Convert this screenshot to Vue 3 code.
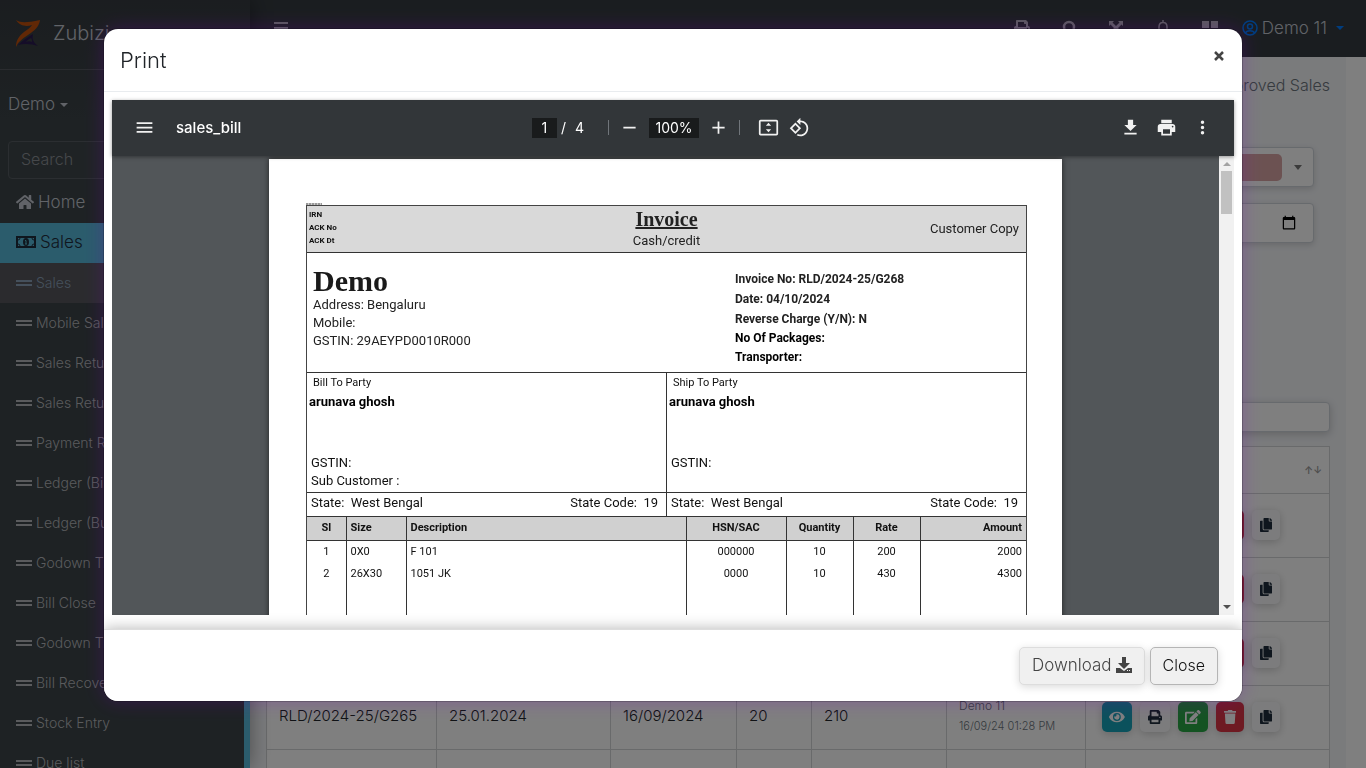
<script setup>
import { ref } from 'vue'

const search = ref('')
const tableSearch = ref('')
const saleDate = ref('')
const pageNo = ref('1')
const zoom = ref('100%')

const menu = [
  'Sales', 'Mobile Sales', 'Sales Return', 'Sales Return List', 'Payment Receive', 'Ledger (Bill)',
  'Ledger (Buyer)', 'Godown Transfer', 'Bill Close', 'Godown Transfer List', 'Bill Recovery',
  'Stock Entry', 'Due list',
]
const rows = [
  { cells: ['', '', '', '', ''], editable: true },
  { cells: ['', '', '', '', ''], editable: true },
  { cells: ['', '', '', '', ''], editable: true },
  { cells: ['RLD/2024-25/G265', '25.01.2024', '16/09/2024', '20', '210'], who: 'Demo 11', at: '16/09/24 01:28 PM', editable: true },
  { cells: ['', '', '', '', ''], editable: false },
]
const fa = {
  eye: ['0 0 576 512', 'M572.52 241.4C518.29 135.59 410.93 64 288 64S57.68 135.64 3.48 241.41a32.35 32.35 0 0 0 0 29.19C57.71 376.41 165.07 448 288 448s230.32-71.64 284.52-177.41a32.35 32.35 0 0 0 0-29.19zM288 400a144 144 0 1 1 144-144 143.93 143.93 0 0 1-144 144zm0-240a95.31 95.31 0 0 0-25.31 3.79 47.85 47.85 0 0 1-66.9 66.9A95.78 95.78 0 1 0 288 160z'],
  print: ['0 0 512 512', 'M448 192V77.25c0-8.49-3.37-16.62-9.37-22.63L393.37 9.37c-6-6-14.14-9.37-22.63-9.37H96C78.33 0 64 14.33 64 32v160c-35.35 0-64 28.65-64 64v112c0 8.84 7.16 16 16 16h48v96c0 17.67 14.33 32 32 32h320c17.67 0 32-14.33 32-32v-96h48c8.84 0 16-7.16 16-16V256c0-35.35-28.65-64-64-64zm-64 256H128v-96h256v96zm0-224H128V64h192v48c0 8.84 7.16 16 16 16h48v96zm48 72c-13.25 0-24-10.75-24-24 0-13.26 10.75-24 24-24s24 10.74 24 24c0 13.25-10.75 24-24 24z'],
  edit: ['0 0 576 512', 'M402.6 83.2l90.2 90.2c3.8 3.8 3.8 10 0 13.8L274.4 405.6l-92.8 10.3c-12.4 1.4-22.9-9.1-21.5-21.5l10.3-92.8L388.8 83.2c3.8-3.8 10-3.8 13.8 0zm162-22.9l-48.8-48.8c-15.2-15.2-39.9-15.2-55.2 0l-35.4 35.4c-3.8 3.8-3.8 10 0 13.8l90.2 90.2c3.8 3.8 10 3.8 13.8 0l35.4-35.4c15.2-15.3 15.2-40 0-55.2zM384 346.2V448H64V128h229.8c3.2 0 6.2-1.3 8.5-3.5l40-40c7.6-7.6 2.2-20.5-8.5-20.5H48C21.5 64 0 85.5 0 112v352c0 26.5 21.5 48 48 48h352c26.5 0 48-21.5 48-48V306.2c0-10.7-12.9-16-20.5-8.5l-40 40c-2.2 2.3-3.5 5.3-3.5 8.5z'],
  trash: ['0 0 448 512', 'M432 32H312l-9.4-18.7A24 24 0 0 0 281.1 0H166.8a23.72 23.72 0 0 0-21.4 13.3L136 32H16A16 16 0 0 0 0 48v32a16 16 0 0 0 16 16h416a16 16 0 0 0 16-16V48a16 16 0 0 0-16-16zM53.2 467a48 48 0 0 0 47.9 45h245.8a48 48 0 0 0 47.9-45L416 128H32z'],
  copy: ['0 0 448 512', 'M320 448v40c0 13.255-10.745 24-24 24H24c-13.255 0-24-10.745-24-24V120c0-13.255 10.745-24 24-24h72v296c0 30.879 25.121 56 56 56h168zm0-344V0H152c-13.255 0-24 10.745-24 24v368c0 13.255 10.745 24 24 24h272c13.255 0 24-10.745 24-24V128H344c-13.2 0-24-10.8-24-24zm120.971-31.029L375.029 7.029A24 24 0 0 0 358.059 0H352v96h96v-6.059a24 24 0 0 0-7.029-16.97z'],
}
const actions = [
  { icon: 'eye', label: 'View', tone: 'info' },
  { icon: 'print', label: 'Print', tone: 'plain' },
  { icon: 'edit', label: 'Edit', tone: 'success' },
  { icon: 'trash', label: 'Delete', tone: 'danger' },
  { icon: 'copy', label: 'Copy', tone: 'plain narrow' },
]
const items = [
  ['1', '0X0', 'F 101', '000000', '10', '200', '2000'],
  ['2', '26X30', '1051 JK', '0000', '10', '430', '4300'],
]
const parties = [
  { title: 'Bill To Party', sub: 'Sub Customer :' },
  { title: 'Ship To Party', sub: '' },
]
</script>

<template>
  <div class="app">
    <aside class="sidebar">
      <a class="brand" href="#">
        <svg class="logo" viewBox="0 0 24 27" aria-hidden="true">
          <path d="M0 0c5 3 10 3 24 0-1 7-5 10-12 15C6 19 2 22 0 27c0-7 3-11 8-15 4-3 7-5 8-7C10 7 4 6 0 0z" fill="#c2500c" />
          <path d="M2 25c5-5 10-8 15-11-1 5 0 8 5 12-6-2-13-3-20-1zm8-3c2-1 4-1 6 0 0-2 0-3-1-4-2 1-4 2-5 4z" fill="#2b1a50" fill-rule="evenodd" />
        </svg>
        <span>Zubizi</span>
      </a>
      <button class="user">Demo <i class="caret"></i></button>
      <div class="side-search"><input v-model="search" type="text" placeholder="Search" aria-label="Search menu" /></div>
      <nav>
        <a class="top-link" href="#">
          <svg viewBox="0 0 576 512" width="18" height="16"><path fill="currentColor" d="M280.37 148.26L96 300.11V464a16 16 0 0 0 16 16l112.06-.29a16 16 0 0 0 15.92-16V368a16 16 0 0 1 16-16h64a16 16 0 0 1 16 16v95.64a16 16 0 0 0 16 16.05L464 480a16 16 0 0 0 16-16V300L295.67 148.26a12.19 12.19 0 0 0-15.3 0zM571.6 251.47L488 182.56V44.05a12 12 0 0 0-12-12h-56a12 12 0 0 0-12 12v72.61L318.47 43a48 48 0 0 0-61 0L4.34 251.47a12 12 0 0 0-1.6 16.9l25.5 31A12 12 0 0 0 45.15 301l235.22-193.74a12.19 12.19 0 0 1 15.3 0L530.9 301a12 12 0 0 0 16.9-1.6l25.5-31a12 12 0 0 0-1.7-16.93z" /></svg>
          Home
        </a>
        <a class="top-link active" href="#">
          <svg viewBox="0 0 20 12" width="20" height="12">
            <rect x="1" y="1" width="18" height="10" fill="none" stroke="currentColor" stroke-width="2" />
            <path d="M2 4a2 2 0 0 0 2-2M18 4a2 2 0 0 1-2-2M2 8a2 2 0 0 1 2 2M18 8a2 2 0 0 0-2 2" fill="none" stroke="currentColor" />
            <ellipse cx="10" cy="6" rx="3" ry="4" fill="currentColor" />
            <path d="M9 4.500h1v3.500M9 8h2" fill="none" stroke="#5bc" stroke-width="1" />
          </svg>
          Sales
        </a>
        <a v-for="(m, i) in menu" :key="m" class="sub-link" :class="{ current: i === 0 }" href="#"><i class="bars"></i>{{ m }}</a>
      </nav>
    </aside>

    <div class="main">
      <header class="navbar">
        <button class="nav-btn" aria-label="Toggle menu"><svg viewBox="0 0 14 14" width="14" height="14"><path fill="currentColor" d="M0 1h14v2H0zM0 6h14v2H0zM0 11h14v2H0z" /></svg></button>
        <div class="nav-icons">
          <button class="nav-btn" aria-label="Print"><svg :viewBox="fa.print[0]" width="16" height="16"><path fill="currentColor" :d="fa.print[1]" /></svg></button>
          <button class="nav-btn" aria-label="Find"><svg viewBox="0 0 16 16" width="16" height="16" fill="none" stroke="currentColor" stroke-width="2.500"><circle cx="8" cy="7" r="5" /><path d="M11 11l4 5" /></svg></button>
          <button class="nav-btn" aria-label="Full screen"><svg viewBox="0 0 16 16" width="16" height="16"><path fill="currentColor" d="M1 1h5L4.500 2.500 8 6l3.500-3.500L10 1h5v5l-1.500-1.500L10 8l3.500 3.500L15 10v5h-5l1.500-1.500L8 10l-3.500 3.500L6 15H1v-5l1.500 1.500L6 8 2.500 4.500 1 6z" /></svg></button>
          <button class="nav-btn" aria-label="Notifications"><svg viewBox="0 0 16 16" width="16" height="16" fill="none" stroke="currentColor" stroke-width="1.500"><path d="M8 0v2M4 12V7c0-6 8-6 8 0v5l2 1H2zM7 15h2" /></svg></button>
          <button class="nav-btn" aria-label="Apps"><svg viewBox="0 0 16 16" width="16" height="16"><path fill="currentColor" d="M0 1h7v7H0zM9 1h7v7H9zM0 10h7v6H0zM9 10h7v6H9z" /></svg></button>
        </div>
        <button class="account">
          <svg viewBox="0 0 16 16" width="16" height="16" fill="none" stroke="currentColor" stroke-width="1.500"><circle cx="8" cy="8" r="7" /><circle cx="8" cy="6.500" r="2.500" /><path d="M3.500 13c1-3 8-3 9 0" /></svg>
          <span>Demo 11</span><i class="caret"></i>
        </button>
      </header>
      <div class="scroller">
        <main class="content">
          <h1>Approved Sales</h1>
          <div class="filters">
            <button class="picker" aria-label="Customer"><span class="chip"></span><i class="caret big"></i></button>
            <input v-model="saleDate" class="date" type="date" aria-label="Date" />
          </div>
          <input v-model="tableSearch" class="finder" type="search" aria-label="Search table" />
          <table class="grid">
            <colgroup><col class="g1" /><col class="g2" /><col class="g3" /><col class="g4" /><col class="g5" /><col class="g6" /><col /></colgroup>
            <thead><tr><th v-for="h in 6" :key="h"></th><th class="sort">↑↓</th></tr></thead>
            <tbody>
              <tr v-for="(r, n) in rows" :key="n">
                <td v-for="(c, i) in r.cells" :key="i">{{ c }}</td>
                <td class="by"><div class="who">{{ r.who }}</div><div>{{ r.at }}</div></td>
                <td>
                  <div v-if="r.editable" class="acts">
                    <button v-for="a in actions" :key="a.icon" class="act" :class="a.tone" :aria-label="a.label">
                      <svg :viewBox="fa[a.icon][0]" height="14"><path fill="currentColor" :d="fa[a.icon][1]" /></svg>
                    </button>
                  </div>
                </td>
              </tr>
            </tbody>
          </table>
        </main>
        <div class="track"></div>
      </div>
    </div>

    <div class="backdrop">
      <section class="modal" role="dialog" aria-labelledby="print-title">
        <header class="modal-head">
          <h2 id="print-title">Print</h2>
          <button class="x" aria-label="Close dialog"><svg viewBox="0 0 10 10" width="10" height="10" stroke="#444" stroke-width="2.500"><path d="M1 1l8 8M9 1L1 9" /></svg></button>
        </header>
        <div class="modal-body">
          <div class="viewer">
            <div class="toolbar">
              <div class="tb-left">
                <button class="tb" aria-label="Menu"><svg viewBox="0 0 24 24"><path d="M3 18h18v-2H3v2zm0-5h18v-2H3v2zm0-7v2h18V6H3z" /></svg></button>
                <span class="doc">sales_bill</span>
              </div>
              <div class="tb-mid">
                <input v-model="pageNo" class="num page-no" aria-label="Page" /><span class="of">/</span><span>4</span>
                <i class="sep first"></i>
                <button class="tb" aria-label="Zoom out"><svg viewBox="0 0 24 24"><path d="M5 11h14v2H5z" /></svg></button>
                <input v-model="zoom" class="num zoom" aria-label="Zoom" />
                <button class="tb" aria-label="Zoom in"><svg viewBox="0 0 24 24"><path d="M19 13h-6v6h-2v-6H5v-2h6V5h2v6h6v2z" /></svg></button>
                <i class="sep"></i>
                <button class="tb fit" aria-label="Fit to page"><svg viewBox="0 0 24 24"><path fill-rule="evenodd" d="M3 3h18a2 2 0 0 1 2 2v14a2 2 0 0 1-2 2H3a2 2 0 0 1-2-2V5a2 2 0 0 1 2-2zm0 2v14h18V5zm9 1.500L15 10H9zm0 11L15 14H9z" /></svg></button>
                <button class="tb" aria-label="Rotate"><svg viewBox="0 0 24 24"><path d="M7.340 6.410L.860 12.900l6.490 6.480 6.490-6.480-6.500-6.490zM3.690 12.900l3.660-3.660L11 12.900l-3.660 3.660-3.650-3.660zm15.670-6.260C17.610 4.880 15.300 4 13 4V.760L8.760 5 13 9.240V6c1.790 0 3.580.680 4.950 2.050 2.730 2.730 2.730 7.170 0 9.900C16.580 19.320 14.790 20 13 20c-.970 0-1.940-.210-2.840-.610l-1.490 1.490C10.020 21.620 11.510 22 13 22c2.300 0 4.610-.880 6.360-2.640 3.520-3.510 3.520-9.210 0-12.720z" /></svg></button>
              </div>
              <div class="tb-right">
                <button class="tb" aria-label="Download file"><svg viewBox="0 0 24 24"><path d="M5 20h14v-2H5v2zM19 9h-4V3H9v6H5l7 7 7-7z" /></svg></button>
                <button class="tb" aria-label="Print file"><svg viewBox="0 0 24 24"><path d="M19 8H5c-1.660 0-3 1.340-3 3v6h4v4h12v-4h4v-6c0-1.660-1.340-3-3-3zm-3 11H8v-5h8v5zm3-7c-.550 0-1-.450-1-1s.450-1 1-1 1 .450 1 1-.450 1-1 1zm-1-9H6v4h12V3z" /></svg></button>
                <button class="tb" aria-label="More"><svg viewBox="0 0 24 24"><path d="M12 8a2 2 0 1 0 0-4 2 2 0 0 0 0 4zm0 2a2 2 0 1 0 0 4 2 2 0 0 0 0-4zm0 6a2 2 0 1 0 0 4 2 2 0 0 0 0-4z" /></svg></button>
              </div>
            </div>
            <div class="stage">
              <div class="canvas">
                <article class="sheet">
                  <i class="speck"></i>
                  <div class="bill">
                    <div class="b-head">
                      <div class="irn"><div>IRN</div><div>ACK No</div><div>ACK Dt</div></div>
                      <div class="b-title"><h3>Invoice</h3><div>Cash/credit</div></div>
                      <div class="b-copy">Customer Copy</div>
                    </div>
                    <div class="b-info">
                      <div class="seller"><h4>Demo</h4><div>Address: Bengaluru</div><div>Mobile:</div><div>GSTIN: 29AEYPD0010R000</div></div>
                      <div class="meta"><div>Invoice No: RLD/2024-25/G268</div><div>Date: 04/10/2024</div><div>Reverse Charge (Y/N): N</div><div class="dark">No Of Packages:</div><div class="dark">Transporter:</div></div>
                    </div>
                    <div class="b-parties">
                      <div v-for="p in parties" :key="p.title" class="party">
                        <div class="p-main">
                          <div class="p-title">{{ p.title }}</div>
                          <div class="p-name">arunava ghosh</div>
                          <div class="p-tax">GSTIN:</div>
                          <div v-if="p.sub">{{ p.sub }}</div>
                        </div>
                        <div class="p-state"><span>State:&nbsp; West Bengal</span><span>State Code:&nbsp; 19</span></div>
                      </div>
                    </div>
                    <table class="items">
                      <colgroup><col class="c1" /><col class="c2" /><col /><col class="c4" /><col class="c5" /><col class="c5" /><col class="c7" /></colgroup>
                      <thead><tr><th>Sl</th><th>Size</th><th>Description</th><th>HSN/SAC</th><th>Quantity</th><th>Rate</th><th>Amount</th></tr></thead>
                      <tbody>
                        <tr v-for="it in items" :key="it[0]"><td v-for="(c, i) in it" :key="i">{{ c }}</td></tr>
                        <tr class="rest"><td v-for="n in 7" :key="n"></td></tr>
                      </tbody>
                    </table>
                  </div>
                </article>
              </div>
              <div class="vbar" aria-hidden="true"><i class="up"></i><i class="thumb"></i><i class="down"></i></div>
            </div>
          </div>
        </div>
        <footer class="modal-foot">
          <button class="btn soft">Download
            <svg viewBox="0 0 16 16" width="16" height="16"><path fill="currentColor" fill-rule="evenodd" d="M6 0h4v6h4l-6 6-6-6h4zM0 11h4l4 3 4-3h4v5H0zm11 2v1h1v-1zm2 0v1h1v-1z" /></svg>
          </button>
          <button class="btn">Close</button>
        </footer>
      </section>
    </div>
  </div>
</template>

<style>
body { overflow: hidden; background: #fff; }
</style>

<style scoped>
* { box-sizing: border-box; }
button { font: inherit; color: inherit; background: none; border: 0; padding: 0; }
input { font: inherit; }
a { color: inherit; text-decoration: none; }
h1, h2, h3, h4 { margin: 0; font-weight: 400; }
.app { display: flex; height: 100vh; font-family: Inter, "Noto Sans", sans-serif; font-size: 16px; font-weight: 300; color: #212529; }
.caret { display: inline-block; border: 4px solid transparent; border-top-color: currentColor; border-bottom: 0; vertical-align: middle; }
.caret.big { border-width: 5px 4px 0; }

.sidebar { flex: 0 0 250px; overflow: hidden; background: linear-gradient(#363b40, #3c4448 120px); color: #c2c7d0; box-shadow: 0 0 20px rgba(0, 0, 0, .4); z-index: 1; }
.sidebar nav { border-right: 6px solid #56b8d8; }
.brand { display: flex; align-items: center; gap: 13px; height: 70px; padding: 0 16px 3px; border-bottom: 1px solid #55595f; font-size: 20px; }
.logo { width: 24px; height: 27px; }
.user { display: block; height: 24px; margin: 22px 8px 25px; font-size: 17px; line-height: 24px; }
.side-search { padding: 0 8px; margin-bottom: 4px; }
.side-search input { display: block; width: 100%; height: 38px; padding: 0 12px 2px; border: 1px solid #565c62; border-radius: 4px; background: #3f474b; color: #fff; font-weight: 300; }
.side-search input::placeholder { color: #8c9196; }
.top-link { display: flex; align-items: center; gap: 4px; height: 40px; padding: 0 16px 2px; font-size: 17px; }
.top-link.active { background: #56b8d8; color: #1f2d3d; }
.sub-link { display: flex; align-items: center; gap: 4px; height: 40px; padding: 0 16px 1px; font-size: 14px; color: #b4b6ba; white-space: nowrap; }
.sub-link.current { background: #56575d; color: #8ba0b8; }
.bars { width: 16px; height: 6px; border-top: 2px solid; border-bottom: 2px solid; }

.main { flex: 1; min-width: 0; display: flex; flex-direction: column; background: #f4f6f9; }
.navbar { display: flex; align-items: center; flex: 0 0 57px; padding: 0 22px 2px 24px; background: #353b40; color: #b4b6ba; }
.nav-btn { display: flex; }
.nav-icons { display: flex; gap: 31px; margin-left: auto; margin-right: 24px; }
.account { display: flex; align-items: center; gap: 4px; font-size: 17px; color: #007bff; }
.account span { color: #c2c7d0; margin-right: 5px; }
.scroller { flex: 1; min-height: 0; display: flex; }
.content { flex: 1; min-width: 0; padding: 16px 16px 0; overflow: hidden; }
.track { width: 20px; background: #fff; }
.content h1 { font-size: 16px; line-height: 24px; text-align: right; color: #6c757d; font-weight: 300; }
.filters { display: grid; gap: 16px; padding: 50px 16px 0 560px; }
.picker, .date { width: 100%; height: 40px; border: 1px solid #ced4da; border-radius: 4px; background: #fff; box-shadow: 0 2px 6px rgba(0, 0, 0, .15); }
.picker { display: flex; align-items: center; gap: 12px; padding: 0 11px 0 5px; color: #777; }
.chip { flex: 1; height: 27px; border-radius: 5px; background: #d9a5a5; }
.date { display: block; padding: 0 14px 0 12px; }
.finder { display: block; width: 300px; height: 30px; margin: 159px 0 14px auto; border: 1px solid #ced4da; border-radius: 4px; background: #fff; box-shadow: 0 2px 8px rgba(0, 0, 0, .2); }
.grid { width: 100%; table-layout: fixed; border-collapse: collapse; background: #fff; }
.g1 { width: 170px; } .g2 { width: 174px; } .g3 { width: 126px; } .g4 { width: 75px; } .g5 { width: 135px; } .g6 { width: 139px; }
.grid th, .grid td { border: 1px solid #d2d4d6; padding: 0 12px; }
.grid th { height: 47px; }
.grid td { height: 64px; padding-bottom: 4px; font-size: 15px; white-space: nowrap; }
.grid .sort { text-align: right; padding-right: 7px; font-size: 10px; font-weight: 600; color: #999; }
.grid .by { font-size: 11px; line-height: 20px; color: #6c757d; }
.grid .by .who { font-size: 12px; }
.acts { display: flex; gap: 8px; padding: 3px 0 0 4px; }
.act { display: flex; align-items: center; justify-content: center; width: 30px; height: 30px; border-radius: 5px; color: #fff; box-shadow: 0 2px 8px rgba(0, 0, 0, .2); }
.info { background: #17a2b8; } .success { background: #28a745; } .danger { background: #dc3545; width: 28px; }
.plain { background: #f8f9fa; color: #1f2d3d; }
.narrow { width: 28px; }

.backdrop { position: fixed; inset: 0; z-index: 5; background: rgba(0, 0, 0, .5); }
.modal { margin: 29px 124px 0 104px; border-radius: 14px; overflow: hidden; background: #fff; box-shadow: 0 0 0 1px rgba(0, 0, 0, .2), 0 0 20px rgba(128, 0, 200, .27); }
.modal-head { display: flex; justify-content: space-between; height: 63px; padding: 16px 18px 0 16px; border-bottom: 1px solid #e9ecef; }
.modal-head h2 { font-size: 22px; line-height: 30px; font-weight: 300; }
.x { display: flex; align-items: center; height: 22px; }
.modal-body { padding: 8px 8px 14px; }
.viewer { background: #525659; }
.toolbar { position: relative; z-index: 1; display: grid; grid-template-columns: 1fr auto 1fr; align-items: center; height: 56px; padding-bottom: 1px; background: #323639; color: #fff; font-size: 14px; font-weight: 400; box-shadow: 0 1px 4px rgba(0, 0, 0, .4); }
.tb { display: flex; }
.tb svg { width: 21px; height: 21px; fill: #f1f1f1; }
.tb-left { display: flex; align-items: center; gap: 21px; padding-left: 22px; }
.doc { font-size: 15px; font-weight: 500; }
.tb-mid { display: flex; align-items: center; margin-right: 4px; }
.num { height: 20px; border: 0; padding: 0; background: #191b1c; color: #fff; text-align: center; }
.page-no { width: 25px; }
.zoom { width: 50px; margin: 0 9px; }
.of { margin: 0 9px 0 4px; }
.sep { width: 1px; height: 15px; background: #70757a; margin: 0 18px 0 10px; }
.sep.first { margin: 0 10px 0 24px; }
.fit { margin-right: 10px; }
.tb-right { display: flex; justify-content: flex-end; gap: 15px; padding-right: 21px; }
.stage { display: flex; height: 459px; }
.canvas { flex: 1; min-width: 0; overflow: hidden; padding-top: 3px; }
.sheet { width: 793px; min-height: 600px; margin: 0 auto; padding: 44px 35px 0 37px; background: #fff; box-shadow: 0 0 6px rgba(0, 0, 0, .6); font-family: Roboto, sans-serif; font-size: 13px; font-weight: 400; color: #222; }
.speck { display: block; width: 16px; height: 2px; background: repeating-linear-gradient(90deg, #999 0 2px, #ccc 2px 3px); }
.vbar { display: flex; flex-direction: column; align-items: center; width: 15px; padding: 6px 0; background: #f1f1f1; }
.up, .down { border: 4px solid transparent; }
.up { border-bottom-color: #a3a3a3; border-top: 0; }
.down { border-top-color: #505050; border-bottom: 0; margin-top: auto; }
.thumb { width: 11px; height: 43px; margin-top: 5px; background: #c1c1c1; }
.bill { border: 1px solid #444; }
.b-head { display: grid; grid-template-columns: 1fr auto 1fr; height: 47px; padding: 0 2px; border-bottom: 1px solid #333; background: #d9d9d9; }
.irn { padding-top: 2px; font-size: 8px; line-height: 13px; font-weight: 700; color: #111; }
.b-title { text-align: center; line-height: 17px; }
.b-title h3 { font: 700 20px/26px "Liberation Serif", serif; text-decoration: underline; }
.b-copy { align-self: center; padding: 0 5px 1px 0; text-align: right; }
.b-info { display: grid; grid-template-columns: 422px 1fr; height: 120px; padding-left: 6px; border-bottom: 1px solid #333; }
.seller { padding-top: 12px; line-height: 18px; }
.seller h4 { font: 700 30px/31px "Liberation Serif", serif; color: #1a1a1a; }
.meta { padding-top: 16px; font-size: 12px; line-height: 20px; font-weight: 700; }
.meta .dark { line-height: 19px; color: #000; }
.b-parties { display: grid; grid-template-columns: 359px 1fr; color: #111; border-bottom: 1px solid #333; }
.party + .party { border-left: 1px solid #333; }
.p-main { height: 120px; padding: 1px 0 0 4px; border-bottom: 1px solid #333; line-height: 18px; }
.p-title { padding-left: 2px; font-size: 11px; }
.p-name { margin-left: -2px; padding-top: 1px; font-weight: 700; color: #000; }
.p-tax { padding-top: 43px; }
.p-state { display: flex; justify-content: space-between; height: 23px; padding: 0 8px 0 4px; line-height: 20px; }
.items { width: 100%; table-layout: fixed; border-collapse: collapse; border-style: hidden; font-size: 11px; line-height: 22px; color: #111; }
.c1 { width: 39px; } .c2 { width: 60px; } .c4 { width: 100px; } .c5 { width: 67px; } .c7 { width: 106px; }
.items th { height: 23px; padding: 0 4px; background: #d0d0d0; border: 1px solid #333; font-weight: 700; text-align: center; }
.items td { padding: 0 4px; border: 1px solid #333; border-top: 0; border-bottom: 0; text-align: center; }
.items th:nth-child(2), .items th:nth-child(3), .items td:nth-child(2), .items td:nth-child(3) { text-align: left; }
.items th:last-child, .items td:last-child { text-align: right; }
.rest td { height: 200px; }
.modal-foot { position: relative; display: flex; justify-content: flex-end; gap: 5px; padding: 17px 24px 16px; border-top: 1px solid #ddd; background: #fff; box-shadow: 0 0 14px rgba(0, 0, 0, .3); }
.btn { display: flex; align-items: center; gap: 4px; height: 38px; padding: 0 12px 2px; border: 1px solid #b5b5b5; border-radius: 5px; background: #f0f0f0; color: #111; box-shadow: 0 2px 8px rgba(0, 0, 0, .15); }
.btn.soft { border-color: #ddd; color: #444; font-size: 17px; }
</style>
